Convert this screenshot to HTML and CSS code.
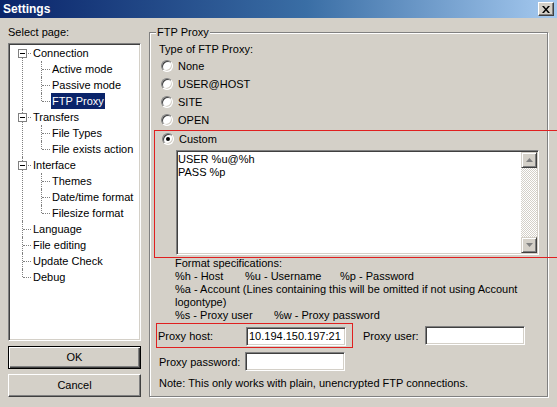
FILE: index.html
```html
<!DOCTYPE html>
<html lang="en">
<head>
    <meta charset="UTF-8">
    <title>Settings</title>
    <link rel="stylesheet" href="styles.css">
</head>
<body>
    <div class="window">
        <div class="titlebar">
            <span class="title">Settings</span>
            <span class="closeBtn">
                <svg width="8" height="7" viewBox="0 0 8 7"><path d="M0 0h2l2 2.5L6 0h2L5 3.5 8 7H6L4 4.5 2 7H0l3-3.5z" fill="#000"/></svg>
            </span>
        </div>

        <div class="main">
            <!-- Lista de paginas -->
            <div class="sidebar">
                <div class="caption">Select page:</div>
                <div class="tree">
                    <ul class="level0">
                        <li class="l0 first">
                            <span class="expander"></span><span class="label">Connection</span>
                            <ul class="level1">
                                <li class="l1"><span class="label">Active mode</span></li>
                                <li class="l1"><span class="label">Passive mode</span></li>
                                <li class="l1 last"><span class="label selected">FTP Proxy</span></li>
                            </ul>
                        </li>
                        <li class="l0">
                            <span class="expander"></span><span class="label">Transfers</span>
                            <ul class="level1">
                                <li class="l1"><span class="label">File Types</span></li>
                                <li class="l1 last"><span class="label">File exists action</span></li>
                            </ul>
                        </li>
                        <li class="l0">
                            <span class="expander"></span><span class="label">Interface</span>
                            <ul class="level1">
                                <li class="l1"><span class="label">Themes</span></li>
                                <li class="l1"><span class="label">Date/time format</span></li>
                                <li class="l1 last"><span class="label">Filesize format</span></li>
                            </ul>
                        </li>
                        <li class="l0"><span class="label">Language</span></li>
                        <li class="l0"><span class="label">File editing</span></li>
                        <li class="l0"><span class="label">Update Check</span></li>
                        <li class="l0 last"><span class="label">Debug</span></li>
                    </ul>
                </div>
                <div class="button default">OK</div>
                <div class="button">Cancel</div>
            </div>

            <!-- Pagina FTP Proxy -->
            <div class="group">
                <div class="groupTitle">FTP Proxy</div>
                <div class="typeLabel">Type of FTP Proxy:</div>
                <div class="radios">
                    <div class="radioRow"><span class="radio"></span>None</div>
                    <div class="radioRow"><span class="radio"></span>USER@HOST</div>
                    <div class="radioRow"><span class="radio"></span>SITE</div>
                    <div class="radioRow"><span class="radio"></span>OPEN</div>
                </div>

                <div class="customBox">
                    <div class="radioRow custom"><span class="radio checked"></span>Custom</div>
                    <div class="memo">
                        <div class="memoText">USER %u@%h<br>PASS %p</div>
                        <div class="scrollbar">
                            <span class="scrollBtn"><svg width="7" height="4" viewBox="0 0 7 4"><path d="M3.5 0L7 4H0z" fill="#808080"/></svg></span>
                            <span class="track"></span>
                            <span class="scrollBtn"><svg width="7" height="4" viewBox="0 0 7 4"><path d="M0 0h7L3.5 4z" fill="#808080"/></svg></span>
                        </div>
                    </div>
                </div>

                <div class="specs">
                    <div>Format specifications:</div>
                    <div class="specRow"><span class="colA">%h - Host</span><span class="colB">%u - Username</span><span>%p - Password</span></div>
                    <div>%a - Account (Lines containing this will be omitted if not using Account<br>logontype)</div>
                    <div class="specRow"><span class="colC">%s - Proxy user</span><span>%w - Proxy password</span></div>
                </div>

                <div class="fieldRow">
                    <div class="hostBox">
                        <span class="fieldLabel">Proxy host:</span>
                        <span class="field">10.194.150.197:21</span>
                    </div>
                    <span class="userLabel">Proxy user:</span>
                    <span class="field"></span>
                </div>
                <div class="fieldRow passRow">
                    <span class="fieldLabel">Proxy password:</span>
                    <span class="field"></span>
                </div>
                <div class="note">Note: This only works with plain, unencrypted FTP connections.</div>
            </div>
        </div>
    </div>
</body>
</html>
```

FILE: styles.css
```css
/* Base da janela */
body {
    margin: 0;
    overflow: hidden;
    background-color: #d4d0c8;
    font-family: "Liberation Sans", Arial, sans-serif;
    font-size: 11px;
    color: #000;
}

.window {
    width: 557px;
    height: 407px;
    overflow: hidden;
}

/* Barra de titulo */
.titlebar {
    height: 18px;
    display: flex;
    align-items: center;
    justify-content: space-between;
    padding: 0 3px 0 3px;
    background: linear-gradient(to right, #0a246a 0%, #3a6ea5 55%, #a6caf0 100%);
}

.title {
    color: #fff;
    font-weight: bold;
    font-size: 12px;
}

.closeBtn {
    width: 14px;
    height: 12px;
    display: flex;
    align-items: center;
    justify-content: center;
    background-color: #d4d0c8;
    border: 1px solid;
    border-color: #fff #404040 #404040 #fff;
    box-shadow: inset -1px -1px #808080;
}

.main {
    display: flex;
    gap: 8px;
    padding: 8px 0 0 8px;
}

/* Coluna da esquerda */
.sidebar {
    width: 133px;
    display: flex;
    flex-direction: column;
}

.caption {
    line-height: 13px;
}

.tree {
    margin-top: 4px;
    height: 294px;
    background-color: #fff;
    border: 1px solid;
    border-color: #808080 #fff #fff #808080;
    box-shadow: inset 1px 1px #404040, inset -1px -1px #d4d0c8;
    padding: 1px;
}

.tree ul {
    list-style: none;
    margin: 0;
    padding: 0;
}

.tree li {
    position: relative;
    line-height: 16px;
    white-space: nowrap;
}

.l0 {
    padding-left: 22px;
}

.l0::before {
    content: "";
    position: absolute;
    left: 12px;
    top: 0;
    bottom: 0;
    border-left: 1px dotted #808080;
}

.l0.first::before {
    top: 8px;
}

.l0.last::before {
    bottom: auto;
    height: 8px;
}

.l0::after {
    content: "";
    position: absolute;
    left: 13px;
    top: 8px;
    width: 8px;
    border-top: 1px dotted #808080;
}

.l1 {
    padding-left: 19px;
}

.l1::before {
    content: "";
    position: absolute;
    left: 9px;
    top: 0;
    bottom: 0;
    border-left: 1px dotted #808080;
}

.l1.last::before {
    bottom: auto;
    height: 8px;
}

.l1::after {
    content: "";
    position: absolute;
    left: 10px;
    top: 8px;
    width: 8px;
    border-top: 1px dotted #808080;
}

.expander {
    position: absolute;
    z-index: 1;
    left: 8px;
    top: 4px;
    width: 7px;
    height: 7px;
    border: 1px solid #808080;
    background-color: #fff;
}

.expander::after {
    content: "";
    position: absolute;
    left: 1px;
    top: 3px;
    width: 5px;
    height: 1px;
    background-color: #000;
}

.label {
    padding: 0 1px;
    display: inline-block;
    line-height: 16px;
}

.label.selected {
    background-color: #0a246a;
    color: #fff;
}

/* Botoes */
.button {
    margin-top: 5px;
    height: 21px;
    line-height: 21px;
    text-align: center;
    border: 1px solid;
    border-color: #fff #404040 #404040 #fff;
    box-shadow: inset -1px -1px #808080;
}

.button.default {
    height: 19px;
    line-height: 19px;
    border: 1px solid #000;
    box-shadow: inset 1px 1px #fff, inset -1px -1px #404040, inset -2px -2px #808080;
    padding: 1px 0;
}

/* Caixa de grupo */
.group {
    margin-top: 6px;
    width: 388px;
    height: 363px;
    padding-left: 9px;
    border: 1px solid #808080;
    box-shadow: inset 1px 1px #fff, 1px 1px #fff;
}

.groupTitle {
    width: max-content;
    margin: -7px 0 0 -3px;
    padding: 0 1px;
    line-height: 13px;
    background-color: #d4d0c8;
}

.typeLabel {
    margin-top: 4px;
    line-height: 13px;
}

.radios {
    margin-top: 1px;
}

.radioRow {
    height: 18px;
    display: flex;
    align-items: center;
    gap: 5px;
    padding-left: 2px;
}

.radio {
    width: 10px;
    height: 10px;
    border-radius: 50%;
    border: 1px solid;
    border-color: #808080 #fff #fff #808080;
    background-color: #fff;
    box-shadow: inset 1px 1px #404040, inset -1px -1px #d4d0c8;
    display: flex;
    align-items: center;
    justify-content: center;
}

.radio.checked::after {
    content: "";
    width: 4px;
    height: 4px;
    border-radius: 50%;
    background-color: #000;
}

/* Destaque vermelho */
.customBox {
    margin: 1px -40px 0 -5px;
    border: 1px solid #e02020;
    padding: 0 0 2px 5px;
}

.radioRow.custom {
    height: 15px;
}

.memo {
    margin: 4px 0 0 16px;
    width: 359px;
    height: 100px;
    display: flex;
    background-color: #fff;
    border: 1px solid;
    border-color: #808080 #fff #fff #808080;
    box-shadow: inset 1px 1px #404040, inset -1px -1px #d4d0c8;
    padding: 2px 1px 1px 1px;
    box-sizing: content-box;
}

.memoText {
    flex: 1;
    line-height: 13px;
}

.scrollbar {
    width: 16px;
    display: flex;
    flex-direction: column;
    margin-top: -1px;
}

.scrollBtn {
    width: 14px;
    height: 14px;
    display: flex;
    align-items: center;
    justify-content: center;
    background-color: #d4d0c8;
    border: 1px solid;
    border-color: #d4d0c8 #404040 #404040 #d4d0c8;
    box-shadow: inset 1px 1px #fff, inset -1px -1px #808080;
}

.track {
    flex: 1;
    background: repeating-conic-gradient(#d4d0c8 0 25%, #fff 0 50%) 0 0 / 2px 2px;
}

/* Especificacoes */
.specs {
    margin: -1px 0 0 16px;
    line-height: 13px;
}

.specRow {
    display: flex;
}

.colA {
    width: 70px;
}

.colB {
    width: 95px;
}

.colC {
    width: 99px;
}

/* Campos */
.fieldRow {
    display: flex;
    align-items: center;
    margin-top: 1px;
}

.hostBox {
    display: flex;
    align-items: center;
    margin-left: -3px;
    width: 195px;
    height: 22px;
    padding-top: 1px;
    border: 1px solid #e02020;
}

.hostBox .fieldLabel {
    padding-left: 1px;
    width: 88px;
}

.fieldLabel {
    width: 86px;
}

.field {
    width: 96px;
    height: 17px;
    line-height: 17px;
    padding-left: 2px;
    white-space: nowrap;
    overflow: hidden;
    background-color: #fff;
    border: 1px solid;
    border-color: #808080 #fff #fff #808080;
    box-shadow: inset 1px 1px #404040, inset -1px -1px #d4d0c8;
}

.userLabel {
    margin-left: 10px;
    width: 62px;
}

.passRow {
    margin-top: 4px;
}

.note {
    margin-top: 6px;
    line-height: 13px;
}
```
